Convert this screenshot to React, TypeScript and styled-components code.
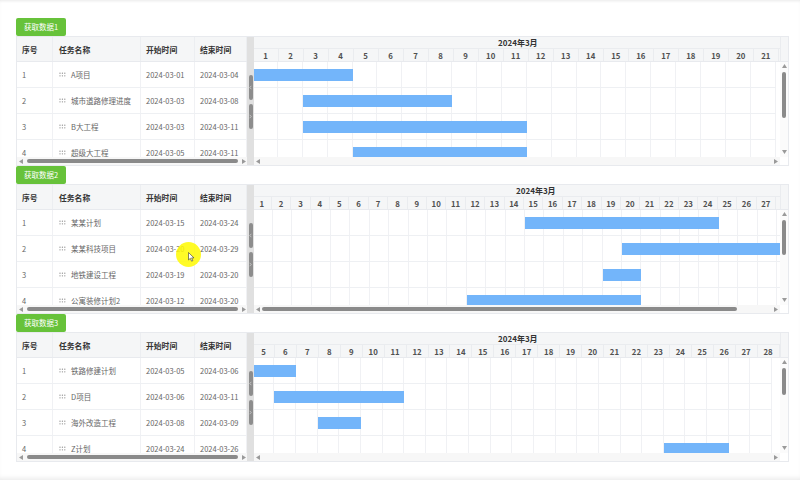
import React from "react";
import styled, { createGlobalStyle } from "styled-components";

type Task = { id: number; name: string; start: string; end: string };
type PanelData = {
  label: string;
  tasks: Task[];
  days: number;
  dayW: number;
  headW: number;
  scroll: number;
  headScroll: number;
  monthLeft: number;
  vThumb: number;
  hThumb?: { left: number; width: number };
};

const VISIBLE = 526;

const panels: PanelData[] = [
  {
    label: "获取数据1",
    tasks: [
      { id: 1, name: "A项目", start: "2024-03-01", end: "2024-03-04" },
      { id: 2, name: "城市道路修理进度", start: "2024-03-03", end: "2024-03-08" },
      { id: 3, name: "B大工程", start: "2024-03-03", end: "2024-03-11" },
      { id: 4, name: "超级大工程", start: "2024-03-05", end: "2024-03-11" },
    ],
    days: 21,
    dayW: 24.9,
    headW: 25.02,
    scroll: 1,
    headScroll: 0.5,
    monthLeft: 244,
    vThumb: 46,
  },
  {
    label: "获取数据2",
    tasks: [
      { id: 1, name: "某某计划", start: "2024-03-15", end: "2024-03-24" },
      { id: 2, name: "某某科技项目", start: "2024-03-20", end: "2024-03-29" },
      { id: 3, name: "地铁建设工程", start: "2024-03-19", end: "2024-03-20" },
      { id: 4, name: "公寓装修计划2", start: "2024-03-12", end: "2024-03-20" },
    ],
    days: 31,
    dayW: 19.4,
    headW: 19.4,
    scroll: 0.5,
    headScroll: 1.5,
    monthLeft: 262,
    vThumb: 35,
    hThumb: { left: 8, width: 475 },
  },
  {
    label: "获取数据3",
    tasks: [
      { id: 1, name: "铁路修建计划", start: "2024-03-05", end: "2024-03-06" },
      { id: 2, name: "D项目", start: "2024-03-06", end: "2024-03-11" },
      { id: 3, name: "海外改造工程", start: "2024-03-08", end: "2024-03-09" },
      { id: 4, name: "Z计划", start: "2024-03-24", end: "2024-03-26" },
    ],
    days: 28,
    dayW: 21.65,
    headW: 21.95,
    scroll: 87.9,
    headScroll: 88.8,
    monthLeft: 244,
    vThumb: 27,
  },
];

const FONT = `"Noto Sans CJK SC", "Noto Sans", "Liberation Sans", sans-serif`;

const GlobalStyle = createGlobalStyle`
  html, body { margin: 0; padding: 0; background: #fff; }
  body { font-family: ${FONT}; }
  * { box-sizing: border-box; }
`;

const Page = styled.div`
  position: relative;
  width: 800px;
  height: 480px;
  padding: 18px 0 0 16px;
  display: flex;
  flex-direction: column;
  background: #fff;
  overflow: hidden;
  box-shadow: inset 0 3px 3px -2px #e9e9e9, inset 0 -4px 4px -2px #ececec;
`;

const Section = styled.section`
  display: flex;
  flex-direction: column;
  align-items: flex-start;
`;

const FetchButton = styled.button`
  width: 50px;
  height: 18px;
  padding: 0;
  border: none;
  border-radius: 2px;
  background: #67c23a;
  color: #fff;
  font-family: ${FONT};
  font-size: 7.5px;
  line-height: 18px;
  text-align: center;
  cursor: pointer;
`;

const Box = styled.div`
  width: 773px;
  height: 130px;
  border: 1px solid #e8eaee;
  display: grid;
  grid-template-columns: 230px 7px 526px 8px;
  grid-template-rows: 25px 95px 8px;
  background: #fff;
`;

const LCols = `36px 88px 54px 52px`;

const LeftHeader = styled.div`
  display: grid;
  grid-template-columns: ${LCols};
  background: #f5f6f7;
  border-bottom: 1px solid #e8eaee;
`;

const HeadCell = styled.div<{ $pad?: number }>`
  display: flex;
  align-items: center;
  min-width: 0;
  overflow: hidden;
  padding-left: ${(p) => p.$pad ?? 5}px;
  font-size: 7.8px;
  font-weight: 700;
  color: #333;
  border-right: 1px solid #eceef1;
  white-space: nowrap;
`;

const LeftBody = styled.div`
  overflow: hidden;
`;

const LRow = styled.div`
  display: grid;
  grid-template-columns: ${LCols};
  height: 26px;
  border-bottom: 1px solid #eef0f3;
`;

const Cell = styled.div`
  display: flex;
  align-items: center;
  min-width: 0;
  overflow: hidden;
  gap: 5px;
  padding-left: 5px;
  font-size: 7.5px;
  color: #666;
  border-right: 1px solid #f0f1f4;
  white-space: nowrap;
`;

const Grip = styled.svg`
  flex: none;
  margin-left: 1px;
`;

const Splitter = styled.div`
  grid-row: 1 / span 3;
  grid-column: 2;
  background: #e0e0e0;
  display: flex;
  flex-direction: column;
  align-items: center;
  justify-content: center;
  gap: 4px;
  padding-top: 1px;
`;

const Handle = styled.div`
  width: 4px;
  height: 25px;
  border-radius: 2px;
  background: #8d8d8d;
  display: flex;
  align-items: center;
  justify-content: center;
`;

const GanttHeader = styled.div`
  overflow: hidden;
  display: flex;
  flex-direction: column;
  background: #f5f6f7;
  border-bottom: 1px solid #e8eaee;
`;

const MonthRow = styled.div<{ $left: number }>`
  height: 12px;
  flex: none;
  padding-left: ${(p) => p.$left}px;
  display: flex;
  align-items: center;
  font-size: 8px;
  font-weight: 700;
  color: #333;
  border-bottom: 1px solid #eaecef;
  white-space: nowrap;
`;

const Track = styled.div<{ $width: number; $shift: number }>`
  flex: none;
  width: ${(p) => p.$width}px;
  margin-left: ${(p) => -p.$shift}px;
`;

const DayRow = styled.div`
  display: flex;
  height: 12px;
`;

const DayHead = styled.div<{ $w: number }>`
  flex: none;
  width: ${(p) => p.$w}px;
  height: 100%;
  display: flex;
  align-items: center;
  justify-content: center;
  font-size: 7.8px;
  font-weight: 600;
  color: #505050;
  border-right: 1px solid #eaecef;
`;

const GanttBody = styled.div`
  overflow: hidden;
`;

const GRow = styled.div`
  position: relative;
  display: flex;
  height: 26px;
  border-bottom: 1px solid #eef0f3;
`;

const DayCell = styled.div<{ $w: number }>`
  flex: none;
  width: ${(p) => p.$w}px;
  height: 100%;
  border-right: 1px solid #f0f1f4;
`;

const Bar = styled.div`
  position: absolute;
  top: 7px;
  height: 12px;
  background: #73b5fa;
`;

const Gutter = styled.div`
  background: #f5f6f7;
  border-left: 1px solid #eaecef;
  border-bottom: 1px solid #e8eaee;
`;

const VScroll = styled.div`
  display: flex;
  flex-direction: column;
  align-items: center;
  padding: 2px 0 3px;
  background: #fbfbfb;
`;

const VThumb = styled.div<{ $len: number }>`
  width: 4.5px;
  height: ${(p) => p.$len}px;
  margin-top: 4px;
  margin-bottom: auto;
  border-radius: 3px;
  background: #8a8a8a;
`;

const HScroll = styled.div`
  display: flex;
  align-items: center;
  gap: 4px;
  padding: 0 2px;
  background: #f7f7f7;
`;

const HThumb = styled.div<{ $len: number; $ml?: number }>`
  flex: none;
  width: ${(p) => p.$len}px;
  height: 4.5px;
  margin-left: ${(p) => p.$ml ?? 0}px;
  margin-right: auto;
  border-radius: 3px;
  background: #8a8a8a;
`;

const Spacer = styled.div`
  flex: 1;
`;

const Corner = styled.div`
  background: #fff;
`;

const Arrow = styled.svg`
  flex: none;
  display: block;
`;

const CursorMark = styled.div`
  position: absolute;
  left: 176px;
  top: 242px;
  width: 25px;
  height: 25px;
  border-radius: 50%;
  background: rgba(255, 250, 0, 0.85);
  pointer-events: none;
`;

const Pointer = styled.svg`
  position: absolute;
  left: 188px;
  top: 252px;
  pointer-events: none;
`;

function Tri({ dir }: { dir: "l" | "r" | "u" | "d" }) {
  const pts =
    dir === "l"
      ? "4,0 4,5 0,2.5"
      : dir === "r"
      ? "0,0 0,5 4,2.5"
      : dir === "u"
      ? "0,4 5,4 2.5,0"
      : "0,0 5,0 2.5,4";
  const w = dir === "l" || dir === "r" ? 4 : 5;
  const h = dir === "l" || dir === "r" ? 5 : 4;
  return (
    <Arrow width={w} height={h} viewBox={`0 0 ${w} ${h}`}>
      <polygon points={pts} fill="#9a9a9a" />
    </Arrow>
  );
}

function GripIcon() {
  const dots = [];
  for (let c = 0; c < 3; c++)
    for (let r = 0; r < 2; r++)
      dots.push(<circle key={`${c}-${r}`} cx={1 + c * 2.4} cy={1.2 + r * 2.6} r={0.65} fill="#8a8a8a" />);
  return (
    <Grip width={7} height={5} viewBox="0 0 7 5">
      {dots}
    </Grip>
  );
}

function Chevron({ right }: { right?: boolean }) {
  return (
    <svg width={3} height={5} viewBox="0 0 3 5">
      <polyline
        points={right ? "0.6,0.8 2.2,2.5 0.6,4.2" : "2.4,0.8 0.8,2.5 2.4,4.2"}
        fill="none"
        stroke="#d8d8d8"
        strokeWidth={0.7}
      />
    </svg>
  );
}

const dayOf = (s: string) => parseInt(s.slice(8), 10);

function GanttPanel({ data }: { data: PanelData }) {
  const days = Array.from({ length: data.days }, (_, i) => i + 1);
  const headDays = days.filter((d) => {
    const center = (d - 0.5) * data.headW - data.headScroll;
    return center > 6 && center < VISIBLE - 6;
  });
  const firstHead = headDays[0] ?? 1;
  const headShift = data.headScroll - (firstHead - 1) * data.headW;
  return (
    <Section>
      <FetchButton>{data.label}</FetchButton>
      <Box>
        <LeftHeader>
          <HeadCell>序号</HeadCell>
          <HeadCell $pad={6}>任务名称</HeadCell>
          <HeadCell>开始时间</HeadCell>
          <HeadCell>结束时间</HeadCell>
        </LeftHeader>
        <Splitter>
          <Handle>
            <Chevron />
          </Handle>
          <Handle>
            <Chevron right />
          </Handle>
        </Splitter>
        <GanttHeader>
          <MonthRow $left={data.monthLeft}>2024年3月</MonthRow>
          <Track $width={headDays.length * data.headW} $shift={headShift}>
            <DayRow>
              {headDays.map((d) => (
                <DayHead key={d} $w={data.headW}>
                  {d}
                </DayHead>
              ))}
            </DayRow>
          </Track>
        </GanttHeader>
        <Gutter />
        <LeftBody>
          {data.tasks.map((t) => (
            <LRow key={t.id}>
              <Cell>{t.id}</Cell>
              <Cell>
                <GripIcon />
                {t.name}
              </Cell>
              <Cell>{t.start}</Cell>
              <Cell>{t.end}</Cell>
            </LRow>
          ))}
        </LeftBody>
        <GanttBody>
          <Track $width={data.days * data.dayW} $shift={data.scroll}>
            {data.tasks.map((t) => {
              const s = dayOf(t.start);
              const e = dayOf(t.end);
              return (
                <GRow key={t.id}>
                  {days.map((d) => (
                    <DayCell key={d} $w={data.dayW} />
                  ))}
                  <Bar style={{ left: (s - 1) * data.dayW, width: (e - s + 1) * data.dayW }} />
                </GRow>
              );
            })}
          </Track>
        </GanttBody>
        <VScroll>
          <Tri dir="u" />
          <VThumb $len={data.vThumb} />
          <Tri dir="d" />
        </VScroll>
        <HScroll>
          <Tri dir="l" />
          <HThumb $len={211} />
          <Tri dir="r" />
        </HScroll>
        <HScroll>
          <Tri dir="l" />
          {data.hThumb ? (
            <HThumb $len={data.hThumb.width} $ml={data.hThumb.left - 10} />
          ) : (
            <Spacer />
          )}
          <Tri dir="r" />
        </HScroll>
        <Corner />
      </Box>
    </Section>
  );
}

export default function App() {
  return (
    <>
      <GlobalStyle />
      <Page>
        {panels.map((p) => (
          <GanttPanel key={p.label} data={p} />
        ))}
        <CursorMark />
        <Pointer width={7} height={10} viewBox="0 0 7 10">
          <path d="M0.5 0.5 L0.5 8 L2.3 6.3 L3.6 9.2 L4.8 8.7 L3.6 5.9 L6 5.9 Z" fill="#fff" stroke="#333" strokeWidth={0.6} />
        </Pointer>
      </Page>
    </>
  );
}
